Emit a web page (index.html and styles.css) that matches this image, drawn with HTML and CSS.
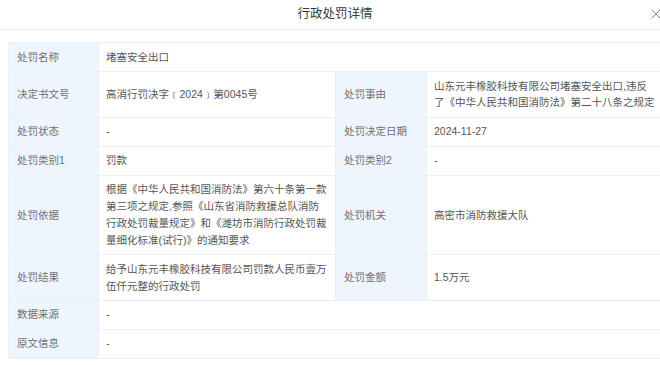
FILE: index.html
```html
<!DOCTYPE html>
<html lang="zh-CN">
<head>
<meta charset="utf-8">
<title>行政处罚详情</title>
<link rel="stylesheet" href="styles.css">
</head>
<body>
<div class="modal">
  <div class="modal-header">
    <span class="spacer"></span>
    <h1 class="modal-title">行政处罚详情</h1>
    <button class="close" aria-label="关闭">
      <svg width="10" height="10" viewBox="0 0 10 10"><path d="M0.8 0.8 L9.2 9.2 M9.2 0.8 L0.8 9.2" stroke="#888" stroke-width="1" fill="none"/></svg>
    </button>
  </div>
  <div class="modal-body">
    <table class="detail">
      <colgroup>
        <col class="c-label"><col class="c-value"><col class="c-label2"><col class="c-value2">
      </colgroup>
      <tr><th>处罚名称</th><td colspan="3">堵塞安全出口</td></tr>
      <tr><th>决定书文号</th><td>高消行罚决字﹝2024﹞第0045号</td><th>处罚事由</th><td>山东元丰橡胶科技有限公司堵塞安全出口,违反了《中华人民共和国消防法》第二十八条之规定</td></tr>
      <tr><th>处罚状态</th><td>-</td><th>处罚决定日期</th><td>2024-11-27</td></tr>
      <tr><th>处罚类别1</th><td>罚款</td><th>处罚类别2</th><td>-</td></tr>
      <tr><th>处罚依据</th><td>根据《中华人民共和国消防法》第六十条第一款第三项之规定,参照《山东省消防救援总队消防行政处罚裁量规定》和《潍坊市消防行政处罚裁量细化标准(试行)》的通知要求</td><th>处罚机关</th><td>高密市消防救援大队</td></tr>
      <tr><th>处罚结果</th><td>给予山东元丰橡胶科技有限公司罚款人民币壹万伍仟元整的行政处罚</td><th>处罚金额</th><td>1.5万元</td></tr>
      <tr><th>数据来源</th><td colspan="3">-</td></tr>
      <tr><th>原文信息</th><td colspan="3">-</td></tr>
    </table>
  </div>
</div>
</body>
</html>
```
FILE: styles.css
```css
html, body {
  margin: 0;
  padding: 0;
  background: #fff;
  overflow: hidden;
}
body {
  font-family: "Liberation Sans", Arial, "Noto Sans CJK SC", sans-serif;
  color: #555;
}
.modal {
  width: 670px;
}
.modal-header {
  display: grid;
  grid-template-columns: 1fr auto 1fr;
  align-items: center;
  height: 30px;
  border-bottom: 1px solid #eeeeee;
  padding: 0 9px 2px 9px;
  box-sizing: border-box;
}
.modal-title {
  margin: 0;
  font-size: 12.5px;
  font-weight: normal;
  color: #3a3a3a;
  line-height: 16px;
}
.close {
  justify-self: end;
  border: 0;
  background: none;
  padding: 0;
  width: 10px;
  height: 10px;
  display: flex;
}
.modal-body {
  padding: 12px 8px;
}
.detail {
  width: 654px;
  border-collapse: collapse;
  table-layout: fixed;
  font-size: 10.5px;
  line-height: 16.8px;
}
.c-label { width: 90px; }
.c-value { width: 237px; }
.c-label2 { width: 91px; }
.c-value2 { width: 236px; }
.detail th, .detail td {
  border: 1px solid #e9eff6;
  padding: 5.6px 7px;
  vertical-align: middle;
  text-align: left;
  font-weight: normal;
}
.detail th {
  background: #eef5fd;
  color: #707070;
  padding-left: 8px;
}
.detail td {
  color: #555;
}
```
